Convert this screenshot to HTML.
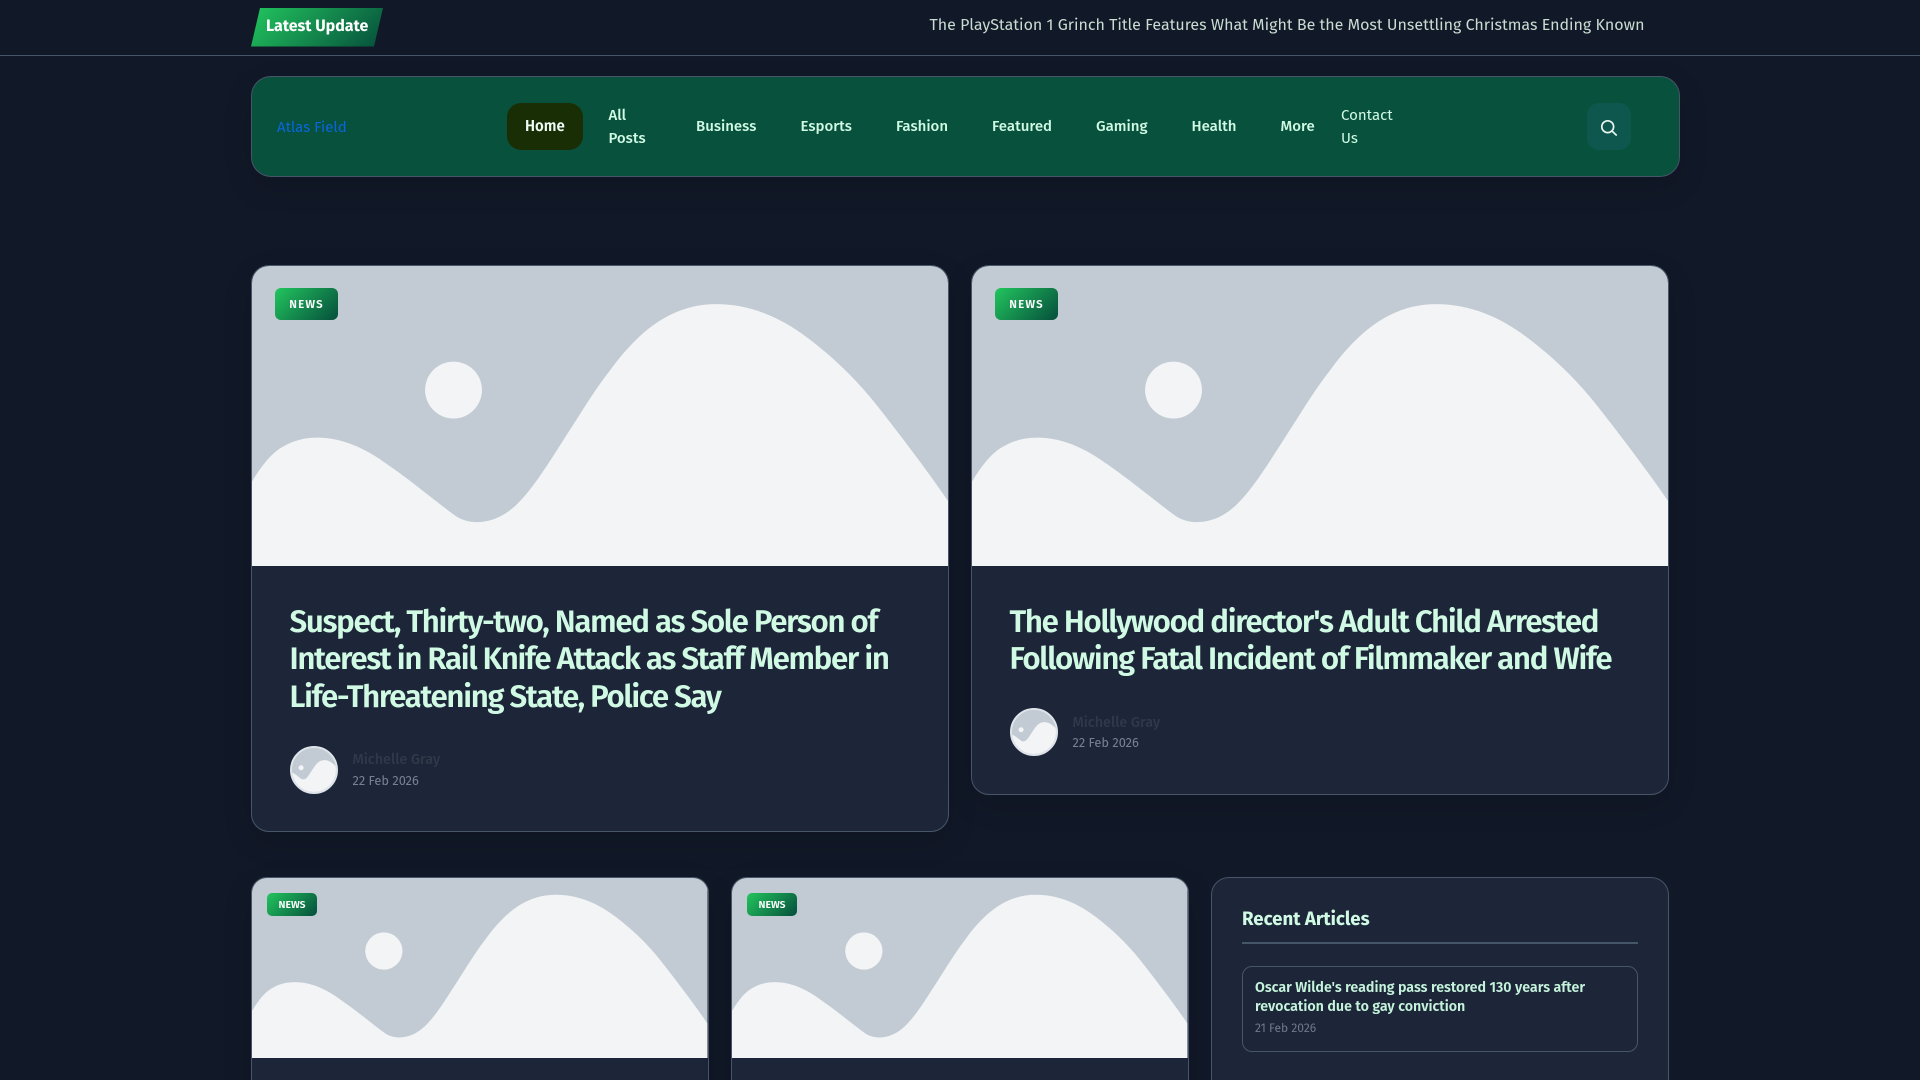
<!DOCTYPE html>
<html lang="en">
<head>
<meta charset="utf-8">
<title>Atlas Field</title>
<style>
*{box-sizing:border-box;margin:0;padding:0}
html,body{width:1920px;height:1080px;overflow:hidden;background:#111827}
body{position:relative;font-family:"Fira Sans","Liberation Sans","DejaVu Sans",sans-serif}
.a{position:absolute;white-space:nowrap}
.topline{left:0;top:55px;width:1920px;height:1px;background:#475569}
.badge{left:251px;top:8px;width:132px;height:38.5px;background:linear-gradient(135deg,#22c55e,#064e3b);clip-path:polygon(9px 0,100% 0,calc(100% - 9px) 100%,0 100%);color:#fff;font-weight:700;font-size:16px;line-height:38px;padding-left:15px}
.ticker{left:929.5px;top:13px;font-size:16px;line-height:25px;color:#c8dcd2}
.nav{left:251px;top:76px;width:1429px;height:101px;background:#07513d;border:1px solid #475569;border-radius:20px;box-shadow:0 10px 30px rgba(0,0,0,.12)}
.logo{left:277px;top:114.5px;font-size:15px;line-height:24px;color:#0a66dd}
.home{left:507px;top:103px;width:76px;height:47px;border-radius:14px;background:#1a2e05}
.nl{font-size:15px;line-height:23px;font-weight:500;color:#d1fae5}
.search{left:1587px;top:103px;width:44px;height:47px;border-radius:12px;background:#0e574e}
.card{background:#1c2638;border:1px solid #475569;overflow:hidden;box-shadow:0 10px 30px rgba(0,0,0,.12)}
.card svg.im{position:absolute;left:0;top:0;display:block}
.big{width:698px;border-radius:18px}
.big svg.im{width:696px;height:300px}
.small{width:457.5px;height:300px;border-radius:16px}
.small svg.im{width:455.5px;height:180px}
.tag{background:linear-gradient(135deg,#22c55e,#064e3b);color:#fff;text-align:center}
.tag.l{width:63px;height:32px;border-radius:6px;font-size:11.5px;font-weight:600;line-height:34.5px;letter-spacing:1.2px}
.tag.s{width:50px;height:23px;border-radius:5px;font-size:10.4px;font-weight:600;line-height:23px}
.title{font-size:31.25px;line-height:37.5px;font-weight:600;color:#d1fae5;letter-spacing:-1.3px}
.av{width:48px;height:48px;border-radius:50%;border:2px solid #dfe4ea;overflow:hidden;background:#c2cbd3}
.av svg{width:44px;height:44px;display:block}
.name{font-size:14.4px;line-height:20px;font-weight:500;color:#2f3949}
.date{font-size:12.8px;line-height:18px;color:#788292}
.side{left:1211px;top:877px;width:458px;height:260px;background:#1c2638;border:1px solid #475569;border-radius:18px}
.st{left:1242px;top:905px;font-size:18.7px;line-height:28px;font-weight:700;color:#d1fae5}
.sl{left:1242px;top:942px;width:396px;height:2px;background:#475569}
.item{left:1242px;top:966px;width:396px;height:86px;border:1px solid #475569;border-radius:10px}
.it{left:1255px;top:978px;font-size:14.25px;line-height:19px;font-weight:600;color:#c5f3dc}
.id{left:1255px;top:1020px;font-size:12px;line-height:18px;color:#6f7a8a}
</style>
</head>
<body>
<svg width="0" height="0" style="position:absolute">
<defs>
<g id="ph">
<rect x="0" y="-100" width="697" height="500" fill="#c2cbd3"/>
<circle cx="201.8" cy="124" r="28.5" fill="#f2f4f6"/>
<path fill="#f2f4f6" d="M0 215.7C11 197 22 185 32.3 180C42 174.5 53 171.7 65.7 171.7C92 171.7 115 184 132.3 196.2C160 215 183 235 204.7 250.7C211 254.5 218 256.3 224.7 256.3C240 256.3 253 250 264.7 239C276 228 285 215 294.7 200.7C305 185 315 169 324.7 154C336 136 347 119 358.7 104C388 64 421 38 464.7 38C505 38 537 56 562 76C590 98 612 121 631 146C656 178 677 206 697 235V400H0Z"/>
</g>
</defs>
</svg>

<div class="a badge">Latest Update</div>
<div class="a ticker">The PlayStation 1 Grinch Title Features What Might Be the Most Unsettling Christmas Ending Known</div>
<div class="a topline"></div>

<div class="a nav"></div>
<div class="a logo">Atlas Field</div>
<div class="a home"></div>
<div class="a nl" style="left:525px;top:115px;font-weight:600;color:#ecfdf5">Home</div>
<div class="a nl" style="left:608.5px;top:103.5px">All<br>Posts</div>
<div class="a nl" style="left:696px;top:115px">Business</div>
<div class="a nl" style="left:800.5px;top:115px">Esports</div>
<div class="a nl" style="left:896px;top:115px">Fashion</div>
<div class="a nl" style="left:992px;top:115px">Featured</div>
<div class="a nl" style="left:1096px;top:115px">Gaming</div>
<div class="a nl" style="left:1191.5px;top:115px">Health</div>
<div class="a nl" style="left:1280.5px;top:115px">More</div>
<div class="a nl" style="left:1341px;top:103.5px;font-weight:400">Contact<br>Us</div>
<div class="a search"></div>
<svg class="a" style="left:1598px;top:116.5px" width="22" height="22" viewBox="0 0 22 22" fill="none" stroke="#e6f5ee" stroke-width="1.7" stroke-linecap="round"><circle cx="9.7" cy="9.7" r="5.9"/><path d="M14 14L18.2 18"/></svg>

<div class="a card big" style="left:251px;top:265px;height:567px"><svg class="im" viewBox="0 -100 697 500" preserveAspectRatio="xMidYMid slice"><use href="#ph"/></svg></div>
<div class="a tag l" style="left:275px;top:288px">NEWS</div>
<div class="a title" style="left:289.5px;top:603.5px">Suspect, Thirty-two, Named as Sole Person of<br>Interest in Rail Knife Attack as Staff Member in<br>Life-Threatening State, Police Say</div>
<div class="a av" style="left:290px;top:746px"><svg viewBox="0 -100 697 500" preserveAspectRatio="xMidYMid slice"><use href="#ph"/></svg></div>
<div class="a name" style="left:352.5px;top:749.5px">Michelle Gray</div>
<div class="a date" style="left:352.5px;top:772.5px">22 Feb 2026</div>

<div class="a card big" style="left:971px;top:265px;height:530px"><svg class="im" viewBox="0 -100 697 500" preserveAspectRatio="xMidYMid slice"><use href="#ph"/></svg></div>
<div class="a tag l" style="left:995px;top:288px">NEWS</div>
<div class="a title" style="left:1009.5px;top:603.5px">The Hollywood director's Adult Child Arrested<br>Following Fatal Incident of Filmmaker and Wife</div>
<div class="a av" style="left:1010px;top:708px"><svg viewBox="0 -100 697 500" preserveAspectRatio="xMidYMid slice"><use href="#ph"/></svg></div>
<div class="a name" style="left:1072.5px;top:712.5px">Michelle Gray</div>
<div class="a date" style="left:1072.5px;top:734.5px">22 Feb 2026</div>

<div class="a card small" style="left:251px;top:877px"><svg class="im" viewBox="0 -100 697 500" preserveAspectRatio="xMidYMid slice"><use href="#ph"/></svg></div>
<div class="a tag s" style="left:267px;top:893px">NEWS</div>
<div class="a card small" style="left:731px;top:877px"><svg class="im" viewBox="0 -100 697 500" preserveAspectRatio="xMidYMid slice"><use href="#ph"/></svg></div>
<div class="a tag s" style="left:747px;top:893px">NEWS</div>

<div class="a side"></div>
<div class="a st">Recent Articles</div>
<div class="a sl"></div>
<div class="a item"></div>
<div class="a it">Oscar Wilde's reading pass restored 130 years after<br>revocation due to gay conviction</div>
<div class="a id">21 Feb 2026</div>
</body>
</html>
